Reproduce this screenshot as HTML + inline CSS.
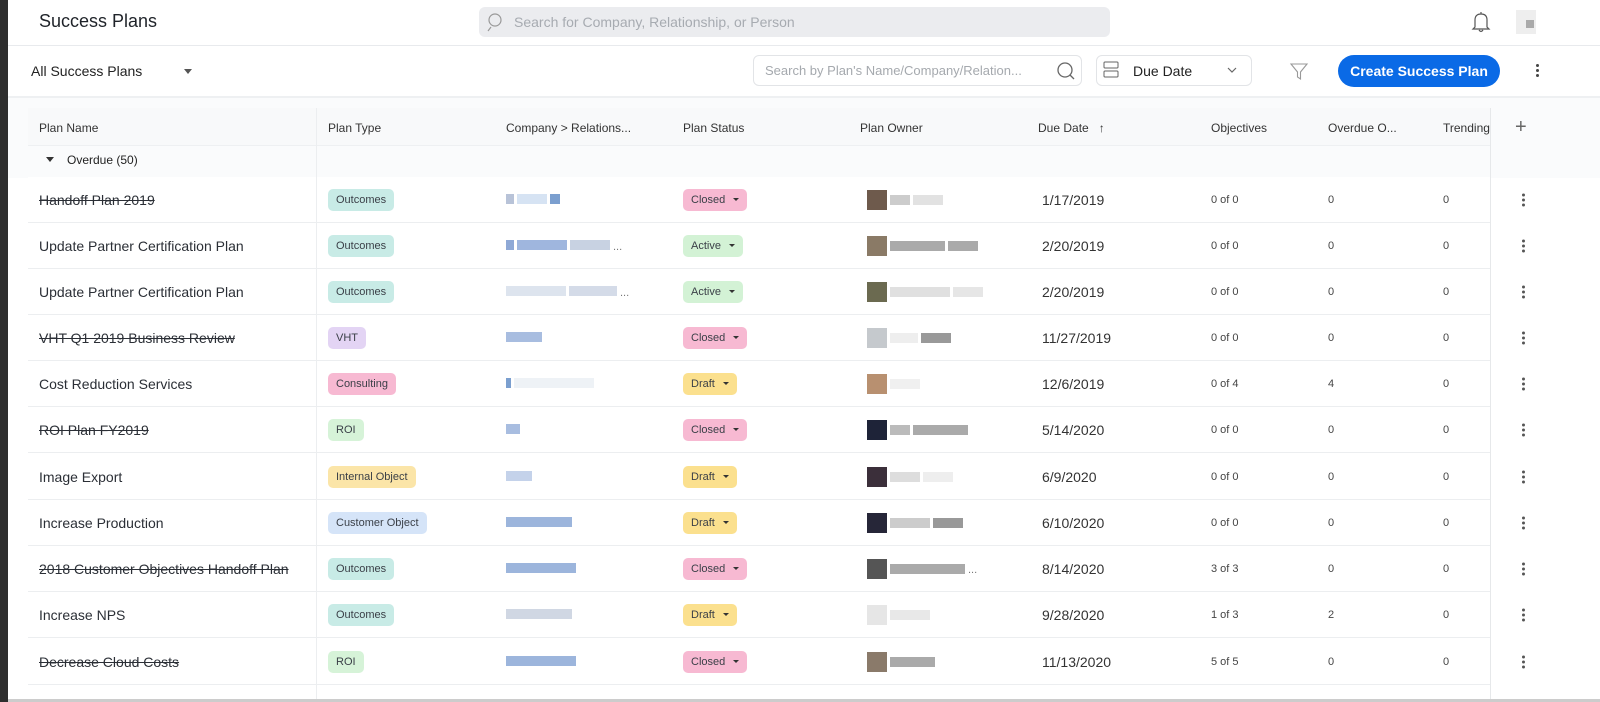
<!DOCTYPE html>
<html><head><meta charset="utf-8"><style>
*{box-sizing:border-box;margin:0;padding:0}
body{width:1600px;height:702px;overflow:hidden;background:#fff;font-family:"Liberation Sans",sans-serif;color:#2b2f36;position:relative}
.a{position:absolute}
.strip{left:0;top:0;width:8px;height:702px;background:#2e2e2e}
.hl{height:1px;background:#e8eaed}
.row{position:absolute;left:28px;width:1462px;height:46px;border-bottom:1px solid #eceef0}
.row>*{position:absolute;top:50%;transform:translateY(-50%)}
.nm{left:11px;font-size:14px;color:#2b2f36;white-space:nowrap}
.st{text-decoration:line-through}
.bd{font-size:11px;padding:5px 8px;border-radius:5px;color:#3a3f47;white-space:nowrap}
.dd:after{content:"";display:inline-block;margin-left:8px;border-left:3px solid transparent;border-right:3px solid transparent;border-top:3px solid #333;vertical-align:middle}
.t{font-size:11px;color:#444}
.dt{left:1014px;font-size:14px;color:#333}
.bl{display:inline-block;height:10px;margin-right:3px;vertical-align:middle}
.kb{left:1494px;width:3px}
.kb i{display:block;width:3px;height:3px;background:#555;border-radius:50%;margin:2px 0}
.hd{font-size:12px;color:#333;top:121px}
</style></head><body>
<div class="a strip"></div>
<div class="a" style="left:39px;top:11px;font-size:18px;color:#1f2329">Success Plans</div>
<div class="a" style="left:479px;top:7px;width:631px;height:30px;background:#ebecef;border-radius:6px"></div>
<svg class="a" style="left:487px;top:12px" width="18" height="20" viewBox="0 0 18 20"><circle cx="8" cy="8" r="6" fill="none" stroke="#999" stroke-width="1.2"/><path d="M4 15 L1 19" stroke="#999" stroke-width="1.2"/></svg>
<div class="a" style="left:514px;top:14px;font-size:14px;color:#a7abb1">Search for Company, Relationship, or Person</div>
<svg class="a" style="left:1470px;top:10px" width="22" height="24" viewBox="0 0 22 24"><path d="M5 17 L5 10 Q5 4 11 4 Q17 4 17 10 L17 17 L19 19 L3 19 Z M9 20 Q11 23 13 20 M11 2 L11 4" fill="none" stroke="#555" stroke-width="1.2"/></svg>
<div class="a" style="left:1516px;top:10px;width:20px;height:24px;background:#eee"><div style="margin:10px 0 0 10px;width:8px;height:8px;background:#aaa"></div></div>
<div class="a hl" style="left:8px;top:45px;width:1592px"></div>
<div class="a" style="left:31px;top:63px;font-size:14px;color:#222">All Success Plans</div>
<div class="a" style="left:184px;top:69px;border-left:4px solid transparent;border-right:4px solid transparent;border-top:5px solid #555"></div>
<div class="a" style="left:753px;top:55px;width:329px;height:31px;border:1px solid #e2e4e7;border-radius:6px"></div>
<div class="a" style="left:765px;top:63px;font-size:13px;color:#a5a9ae">Search by Plan's Name/Company/Relation...</div>
<svg class="a" style="left:1056px;top:61px" width="20" height="20" viewBox="0 0 20 20"><circle cx="9" cy="9" r="7" fill="none" stroke="#666" stroke-width="1.3"/><path d="M14 14 L18 18" stroke="#666" stroke-width="1.3"/></svg>
<div class="a" style="left:1096px;top:55px;width:156px;height:31px;border:1px solid #e2e4e7;border-radius:6px"></div>
<svg class="a" style="left:1103px;top:61px" width="16" height="18" viewBox="0 0 16 18"><rect x="1" y="1" width="14" height="6" rx="1" fill="none" stroke="#666"/><rect x="1" y="10" width="14" height="6" rx="1" fill="none" stroke="#666"/></svg>
<div class="a" style="left:1133px;top:63px;font-size:14px;color:#222">Due Date</div>
<svg class="a" style="left:1226px;top:66px" width="12" height="8" viewBox="0 0 12 8"><path d="M2 2 L6 6 L10 2" fill="none" stroke="#666" stroke-width="1.2"/></svg>
<svg class="a" style="left:1289px;top:61px" width="20" height="20" viewBox="0 0 20 20"><path d="M2 3 L18 3 L11.5 11 L11.5 18 L8.5 16 L8.5 11 Z" fill="none" stroke="#999" stroke-width="1.1"/></svg>
<div class="a" style="left:1338px;top:55px;width:162px;height:32px;background:#0a6ae6;border-radius:16px;color:#fff;font-size:14px;font-weight:bold;text-align:center;line-height:32px">Create Success Plan</div>
<div class="a" style="left:1536px;top:64px;width:3px"><i style="display:block;width:3px;height:3px;background:#444;border-radius:50%;margin-bottom:2px"></i><i style="display:block;width:3px;height:3px;background:#444;border-radius:50%;margin-bottom:2px"></i><i style="display:block;width:3px;height:3px;background:#444;border-radius:50%"></i></div>
<div class="a hl" style="left:8px;top:96px;width:1592px;background:#eef0f2;height:2px"></div>
<div class="a" style="left:8px;top:98px;width:1592px;height:80px;background:#fafbfc"></div>
<div class="a" style="left:28px;top:108px;width:1462px;height:38px;background:#f8f9fa;border-bottom:1px solid #eef0f2"></div>
<div class="a" style="left:316px;top:108px;width:1px;height:594px;background:#eceef0"></div>
<div class="a" style="left:1490px;top:108px;width:1px;height:594px;background:#e6e8ea"></div>
<div class="a hd" style="left:39px">Plan Name</div>
<div class="a hd" style="left:328px">Plan Type</div>
<div class="a hd" style="left:506px">Company &gt; Relations...</div>
<div class="a hd" style="left:683px">Plan Status</div>
<div class="a hd" style="left:860px">Plan Owner</div>
<div class="a hd" style="left:1038px">Due Date &nbsp;&nbsp;↑</div>
<div class="a hd" style="left:1211px">Objectives</div>
<div class="a hd" style="left:1328px">Overdue O...</div>
<div class="a hd" style="left:1443px;width:48px;overflow:hidden;white-space:nowrap">Trending</div>
<div class="a" style="left:1515px;top:116px;font-size:20px;color:#666;font-weight:300">+</div>
<div class="a" style="left:46px;top:157px;border-left:4px solid transparent;border-right:4px solid transparent;border-top:5px solid #333"></div>
<div class="a" style="left:67px;top:153px;font-size:12px;color:#222">Overdue (50)</div>
<div class="a" style="left:28px;top:177px;width:1462px;height:525px;background:#fff"></div>

<div class="row" style="top:177px"><span class="nm st">Handoff Plan 2019</span><span class="bd" style="left:300px;background:#c8ebe6">Outcomes</span><span style="left:478px"><i class="bl" style="width:8px;background:#b8c3d8"></i><i class="bl" style="width:30px;background:#d6e3f3"></i><i class="bl" style="width:10px;background:#7b9fcf"></i></span><span class="bd dd" style="left:655px;background:#f7b9d2">Closed</span><span style="left:839px"><i class="bl" style="width:20px;height:20px;background:#6e5a4c"></i><i class="bl" style="width:20px;background:#ccc"></i><i class="bl" style="width:30px;background:#e2e2e2"></i></span><span class="dt">1/17/2019</span><span class="t" style="left:1183px">0 of 0</span><span class="t" style="left:1300px">0</span><span class="t" style="left:1415px">0</span><span class="kb"><i></i><i></i><i></i></span></div>
<div class="row" style="top:223px"><span class="nm">Update Partner Certification Plan</span><span class="bd" style="left:300px;background:#c8ebe6">Outcomes</span><span style="left:478px"><i class="bl" style="width:8px;background:#8fa9d6"></i><i class="bl" style="width:50px;background:#9fb6de"></i><i class="bl" style="width:40px;background:#c8d2e2"></i><span style="font-size:11px;color:#777">...</span></span><span class="bd dd" style="left:655px;background:#d3f2d5">Active</span><span style="left:839px"><i class="bl" style="width:20px;height:20px;background:#8a7a66"></i><i class="bl" style="width:55px;background:#aaa"></i><i class="bl" style="width:30px;background:#aaa"></i></span><span class="dt">2/20/2019</span><span class="t" style="left:1183px">0 of 0</span><span class="t" style="left:1300px">0</span><span class="t" style="left:1415px">0</span><span class="kb"><i></i><i></i><i></i></span></div>
<div class="row" style="top:269px"><span class="nm">Update Partner Certification Plan</span><span class="bd" style="left:300px;background:#c8ebe6">Outcomes</span><span style="left:478px"><i class="bl" style="width:60px;background:#dde4ee"></i><i class="bl" style="width:48px;background:#d4dbe8"></i><span style="font-size:11px;color:#777">...</span></span><span class="bd dd" style="left:655px;background:#d3f2d5">Active</span><span style="left:839px"><i class="bl" style="width:20px;height:20px;background:#6b6a50"></i><i class="bl" style="width:60px;background:#e0e0e0"></i><i class="bl" style="width:30px;background:#e6e6e6"></i></span><span class="dt">2/20/2019</span><span class="t" style="left:1183px">0 of 0</span><span class="t" style="left:1300px">0</span><span class="t" style="left:1415px">0</span><span class="kb"><i></i><i></i><i></i></span></div>
<div class="row" style="top:315px"><span class="nm st">VHT Q1 2019 Business Review</span><span class="bd" style="left:300px;background:#e3d4f4">VHT</span><span style="left:478px"><i class="bl" style="width:36px;background:#a8bde0"></i></span><span class="bd dd" style="left:655px;background:#f7b9d2">Closed</span><span style="left:839px"><i class="bl" style="width:20px;height:20px;background:#c5c9cd"></i><i class="bl" style="width:28px;background:#eee"></i><i class="bl" style="width:30px;background:#999"></i></span><span class="dt">11/27/2019</span><span class="t" style="left:1183px">0 of 0</span><span class="t" style="left:1300px">0</span><span class="t" style="left:1415px">0</span><span class="kb"><i></i><i></i><i></i></span></div>
<div class="row" style="top:361px"><span class="nm">Cost Reduction Services</span><span class="bd" style="left:300px;background:#f7b9d2">Consulting</span><span style="left:478px"><i class="bl" style="width:5px;background:#7b9fcf"></i><i class="bl" style="width:80px;background:#eef2f6"></i></span><span class="bd dd" style="left:655px;background:#fbe08e">Draft</span><span style="left:839px"><i class="bl" style="width:20px;height:20px;background:#b89070"></i><i class="bl" style="width:30px;background:#f0f0f0"></i></span><span class="dt">12/6/2019</span><span class="t" style="left:1183px">0 of 4</span><span class="t" style="left:1300px">4</span><span class="t" style="left:1415px">0</span><span class="kb"><i></i><i></i><i></i></span></div>
<div class="row" style="top:407px"><span class="nm st">ROI Plan FY2019</span><span class="bd" style="left:300px;background:#d6f3d8">ROI</span><span style="left:478px"><i class="bl" style="width:14px;background:#a8bde0"></i></span><span class="bd dd" style="left:655px;background:#f7b9d2">Closed</span><span style="left:839px"><i class="bl" style="width:20px;height:20px;background:#1e2338"></i><i class="bl" style="width:20px;background:#bbb"></i><i class="bl" style="width:55px;background:#aaa"></i></span><span class="dt">5/14/2020</span><span class="t" style="left:1183px">0 of 0</span><span class="t" style="left:1300px">0</span><span class="t" style="left:1415px">0</span><span class="kb"><i></i><i></i><i></i></span></div>
<div class="row" style="top:454px"><span class="nm">Image Export</span><span class="bd" style="left:300px;background:#fbe5a8">Internal Object</span><span style="left:478px"><i class="bl" style="width:26px;background:#c4d2ea"></i></span><span class="bd dd" style="left:655px;background:#fbe08e">Draft</span><span style="left:839px"><i class="bl" style="width:20px;height:20px;background:#3b2f3a"></i><i class="bl" style="width:30px;background:#ddd"></i><i class="bl" style="width:30px;background:#eee"></i></span><span class="dt">6/9/2020</span><span class="t" style="left:1183px">0 of 0</span><span class="t" style="left:1300px">0</span><span class="t" style="left:1415px">0</span><span class="kb"><i></i><i></i><i></i></span></div>
<div class="row" style="top:500px"><span class="nm">Increase Production</span><span class="bd" style="left:300px;background:#d5e4f8">Customer Object</span><span style="left:478px"><i class="bl" style="width:66px;background:#9cb5dc"></i></span><span class="bd dd" style="left:655px;background:#fbe08e">Draft</span><span style="left:839px"><i class="bl" style="width:20px;height:20px;background:#262638"></i><i class="bl" style="width:40px;background:#ccc"></i><i class="bl" style="width:30px;background:#999"></i></span><span class="dt">6/10/2020</span><span class="t" style="left:1183px">0 of 0</span><span class="t" style="left:1300px">0</span><span class="t" style="left:1415px">0</span><span class="kb"><i></i><i></i><i></i></span></div>
<div class="row" style="top:546px"><span class="nm st">2018 Customer Objectives Handoff Plan</span><span class="bd" style="left:300px;background:#c8ebe6">Outcomes</span><span style="left:478px"><i class="bl" style="width:70px;background:#9cb5dc"></i></span><span class="bd dd" style="left:655px;background:#f7b9d2">Closed</span><span style="left:839px"><i class="bl" style="width:20px;height:20px;background:#555"></i><i class="bl" style="width:75px;background:#aaa"></i><span style="font-size:11px;color:#777">...</span></span><span class="dt">8/14/2020</span><span class="t" style="left:1183px">3 of 3</span><span class="t" style="left:1300px">0</span><span class="t" style="left:1415px">0</span><span class="kb"><i></i><i></i><i></i></span></div>
<div class="row" style="top:592px"><span class="nm">Increase NPS</span><span class="bd" style="left:300px;background:#c8ebe6">Outcomes</span><span style="left:478px"><i class="bl" style="width:66px;background:#d0d7e3"></i></span><span class="bd dd" style="left:655px;background:#fbe08e">Draft</span><span style="left:839px"><i class="bl" style="width:20px;height:20px;background:#e6e6e6"></i><i class="bl" style="width:40px;background:#e8e8e8"></i></span><span class="dt">9/28/2020</span><span class="t" style="left:1183px">1 of 3</span><span class="t" style="left:1300px">2</span><span class="t" style="left:1415px">0</span><span class="kb"><i></i><i></i><i></i></span></div>
<div class="row" style="top:639px"><span class="nm st">Decrease Cloud Costs</span><span class="bd" style="left:300px;background:#d6f3d8">ROI</span><span style="left:478px"><i class="bl" style="width:70px;background:#9cb5dc"></i></span><span class="bd dd" style="left:655px;background:#f7b9d2">Closed</span><span style="left:839px"><i class="bl" style="width:20px;height:20px;background:#8a7a6a"></i><i class="bl" style="width:45px;background:#aaa"></i></span><span class="dt">11/13/2020</span><span class="t" style="left:1183px">5 of 5</span><span class="t" style="left:1300px">0</span><span class="t" style="left:1415px">0</span><span class="kb"><i></i><i></i><i></i></span></div>
<div class="a" style="left:1490px;top:108px;width:1px;height:594px;background:#e6e8ea"></div>
<div class="a" style="left:316px;top:177px;width:1px;height:525px;background:#eceef0"></div>
<div class="a" style="left:8px;top:699px;width:1592px;height:3px;background:#ccc"></div>
</body></html>
